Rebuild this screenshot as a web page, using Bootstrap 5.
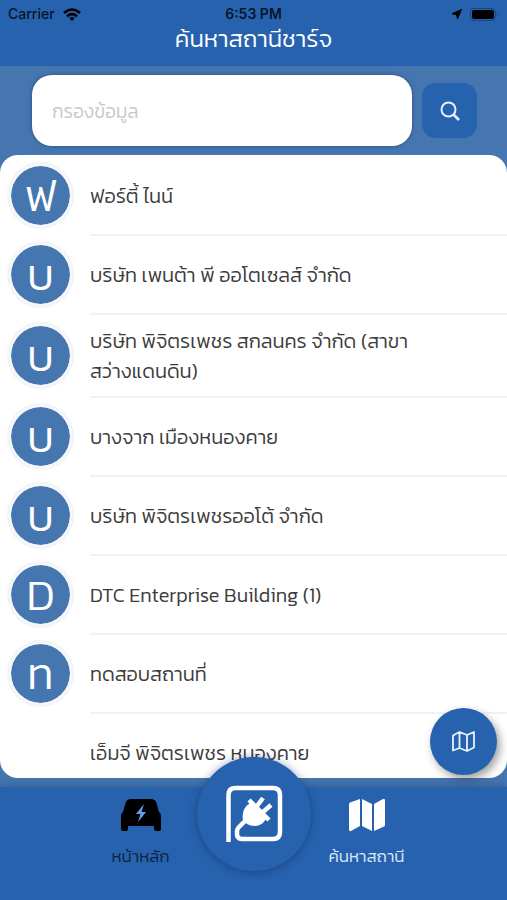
<!DOCTYPE html>
<html lang="th">
<head>
<meta charset="utf-8">
<meta name="viewport" content="width=device-width, initial-scale=1">
<title>ค้นหาสถานีชาร์จ</title>
<link href="https://cdn.jsdelivr.net/npm/bootstrap@5.3.0/dist/css/bootstrap.min.css" rel="stylesheet">
<style>
:root { --deep: #2762ae; --soft: #4676b0; }
body { font-family: Kanit, Prompt, "Noto Sans Thai", "Open Sans", sans-serif; font-weight: 300; background: var(--soft); color: #3c3c3c; }
.app { height: 100vh; }
.deep { background: var(--deep); }
.status { font: 500 14px/20px Inter, sans-serif; color: #08152a; padding: 4px 8px 0; }
.clock { font-weight: 600; }
.title { font-size: 24px; line-height: 30px; padding-bottom: 12px; font-weight: 300; }
.search { padding: 9px 30px 9px 32px; gap: 10px; }
.search .form-control { height: 71px; border-radius: 20px; padding: 2px 20px 0; font-size: 19px; font-weight: 300; box-shadow: 0 0 4px rgba(20,40,90,.5); }
.search .form-control::placeholder { color: #c8c8cc; }
.search .btn { width: 55px; height: 55px; border-radius: 14px; }
.stations { border-radius: 18px; margin-bottom: 9px; padding-top: 2px; }
.station { min-height: 79px; }
.avatar { width: 65px; height: 65px; margin: 0 17px 2px 8px; border: 3px solid #f5f7fa; background: var(--soft); background-clip: padding-box; font-size: 44px; line-height: 60px; box-shadow: 0 0 2px rgba(90,100,120,.25); }
.info { padding: 11px 80px 10px 0; font-size: 20px; line-height: 30px; border-bottom: 2px solid #f2f2f3; }
.tabs { height: 113px; box-shadow: 0 -2px 8px rgba(30,60,110,.35); }
.tab { width: 112px; padding-top: 11px; font-size: 17px; line-height: 24px; color: #dbe8fa; }
.tab.active { color: #0d2240; }
.tab svg { margin-bottom: 12px; }
.plug { width: 114px; height: 114px; margin-top: -30px; box-shadow: 0 1px 8px rgba(15,40,85,.5); }
.fab { position: absolute; right: 10px; bottom: 125px; width: 67px; height: 67px; box-shadow: 3px 4px 8px rgba(40,40,40,.45); z-index: 3; }
</style>
<script src="https://cdn.jsdelivr.net/npm/bootstrap@5.3.0/dist/js/bootstrap.bundle.min.js"></script>
</head>
<body>
<div class="app d-flex flex-column position-relative overflow-hidden">
  <header class="deep">
    <div class="status row g-0">
      <div class="col d-flex align-items-center gap-2">Carrier
        <svg width="18" height="13" viewBox="0 0 18 13" fill="none" stroke="#000" stroke-width="2.6"><path d="M1 5Q9-2 17 5M4 8.200Q9 4 14 8.200"/><path d="M9 13 6.200 10Q9 7.800 11.800 10Z" fill="#000" stroke="none"/></svg>
      </div>
      <div class="col-auto clock">6:53 PM</div>
      <div class="col d-flex align-items-center justify-content-end gap-2">
        <svg width="11" height="11" viewBox="0 0 11 11"><path d="M10.500.5 6.500 10 5.400 5.700 1 4.700Z" stroke="#000"/></svg>
        <svg width="29" height="13" viewBox="0 0 29 13"><rect x=".5" y=".5" width="25" height="12" rx="3.500" fill="none" stroke="#164684"/><rect x="2" y="2" width="22" height="9" rx="2"/><path d="M27 4.500q2 2 0 4Z" fill="#164684"/></svg>
      </div>
    </div>
    <h1 class="title text-white text-center mb-0">ค้นหาสถานีชาร์จ</h1>
  </header>

  <form class="search d-flex align-items-center" role="search">
    <input type="text" class="form-control border-0 flex-fill" placeholder="กรองข้อมูล" aria-label="กรองข้อมูล">
    <button type="button" class="btn deep border-0 p-0 d-flex align-items-center justify-content-center flex-shrink-0" aria-label="ค้นหา">
      <svg width="20" height="20" viewBox="0 0 20 20" fill="none" stroke="#e4f0ff" stroke-width="2"><circle cx="8.500" cy="8.500" r="7"/><path d="m13.500 13.500 5.500 5.500" stroke-width="2.600"/></svg>
    </button>
  </form>

  <main class="stations bg-white flex-fill overflow-hidden">
    <ul class="list-unstyled mb-0">
      <li class="station d-flex"><span class="avatar rounded-circle text-white text-center flex-shrink-0 align-self-center">ฟ</span><div class="info flex-fill d-flex align-items-center">ฟอร์ตี้ ไนน์</div></li>
      <li class="station d-flex"><span class="avatar rounded-circle text-white text-center flex-shrink-0 align-self-center">บ</span><div class="info flex-fill d-flex align-items-center">บริษัท เพนต้า พี ออโตเซลส์ จำกัด</div></li>
      <li class="station d-flex"><span class="avatar rounded-circle text-white text-center flex-shrink-0 align-self-center">บ</span><div class="info flex-fill d-flex align-items-center">บริษัท พิจิตรเพชร สกลนคร จำกัด (สาขาสว่างแดนดิน)</div></li>
      <li class="station d-flex"><span class="avatar rounded-circle text-white text-center flex-shrink-0 align-self-center">บ</span><div class="info flex-fill d-flex align-items-center">บางจาก เมืองหนองคาย</div></li>
      <li class="station d-flex"><span class="avatar rounded-circle text-white text-center flex-shrink-0 align-self-center">บ</span><div class="info flex-fill d-flex align-items-center">บริษัท พิจิตรเพชรออโต้ จำกัด</div></li>
      <li class="station d-flex"><span class="avatar rounded-circle text-white text-center flex-shrink-0 align-self-center">D</span><div class="info flex-fill d-flex align-items-center">DTC Enterprise Building (1)</div></li>
      <li class="station d-flex"><span class="avatar rounded-circle text-white text-center flex-shrink-0 align-self-center">ท</span><div class="info flex-fill d-flex align-items-center">ทดสอบสถานที่</div></li>
      <li class="station d-flex"><span class="avatar invisible flex-shrink-0"></span><div class="info flex-fill d-flex align-items-center">เอ็มจี พิจิตรเพชร หนองคาย</div></li>
    </ul>
  </main>

  <button type="button" class="fab btn deep rounded-circle border-0 p-0 d-flex align-items-center justify-content-center" aria-label="แผนที่">
    <svg width="23" height="21" viewBox="0 0 23 21" fill="none" stroke="#e8f2ff" stroke-width="1.800" stroke-linejoin="round"><path d="M1 4.500 7.500 1l7.500 3 7-3v15.500L15 20l-7.500-3L1 19.500ZM7.500 1v16M15 4v16"/></svg>
  </button>

  <nav class="tabs deep d-flex justify-content-center flex-shrink-0 position-relative">
    <a href="#" class="tab active text-center text-decoration-none">
      <svg class="d-block mx-auto" width="42" height="34" viewBox="0 0 42 34"><path d="M11 1h20q4 0 5.500 4l2.500 9q2 1 2 4v13q0 2-2 2h-3q-2 0-2-2v-3H8v3q0 2-2 2H3q-2 0-2-2V18q0-3 2-4l2.500-9Q7 1 11 1Z"/><path d="m24 6-8 10h4.500l-2.500 8 8-10h-4.500Z" fill="#5fa3ee"/></svg>
      หน้าหลัก
    </a>
    <a href="#" class="plug deep rounded-circle d-flex align-items-center justify-content-center flex-shrink-0" aria-label="ชาร์จ">
      <svg width="58" height="58" viewBox="0 0 58 58" fill="none" stroke="#fff" stroke-width="4.500"><path d="M3.500 57V10q0-7 7-7H48q7 0 7 7v37q0 7-7 7H17q-5 0-5-5v-3q0-2 2-4l8-8"/><path d="M25 18 41 34Q37 41 30 41 25 41 22 39L18 35Q16 24 25 18Z" fill="#fff" stroke="none"/><path d="M24 15 44 35M32 21l6-8M38 27l8-7" stroke-width="4.500"/></svg>
    </a>
    <a href="#" class="tab text-center text-decoration-none">
      <svg class="d-block mx-auto" width="36" height="34" viewBox="0 0 36 34" fill="#fff"><path d="M0 6q0-1 1-1.500L11 1v27L2 33q-2 .5-2-1ZM13 1l10 5v27l-10-5ZM25 6l9-5q2-.5 2 1v25q0 1-1 1.500L25 33Z"/></svg>
      ค้นหาสถานี
    </a>
  </nav>
</div>
</body>
</html>
